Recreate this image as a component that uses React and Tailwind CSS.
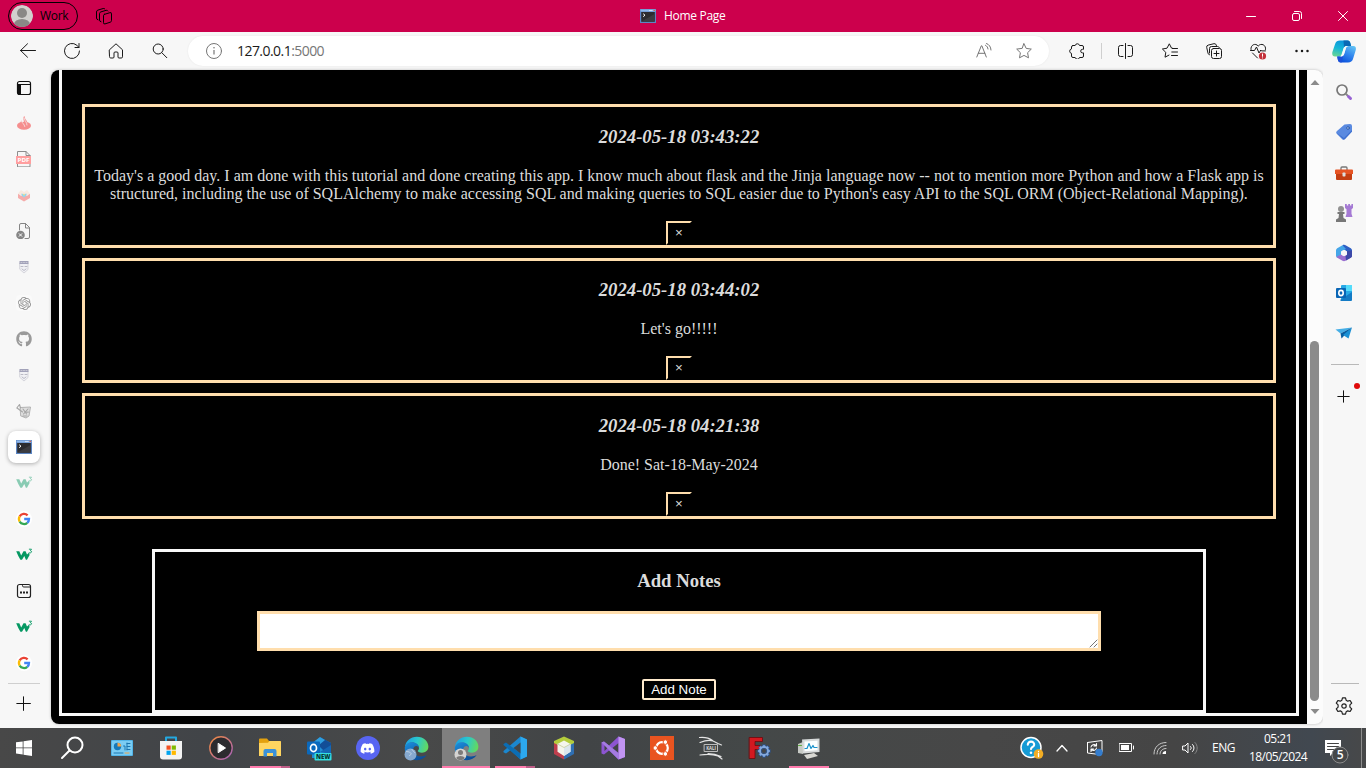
import React from "react";
import { FaGithub, FaDiscord } from "react-icons/fa";
import { SiOpenai } from "react-icons/si";

const UI = "font-['Open_Sans','Noto_Sans',sans-serif]";

function Icon({ s = 16, w, h, vb, children, className = "", ...rest }) {
  return (
    <svg
      width={w || s}
      height={h || s}
      viewBox={vb || `0 0 ${w || s} ${h || s}`}
      fill="none"
      stroke="currentColor"
      strokeWidth="1"
      strokeLinecap="round"
      strokeLinejoin="round"
      className={"block shrink-0 " + className}
      {...rest}
    >
      {children}
    </svg>
  );
}

function Terminal() {
  return (
    <Icon w={16} h={14} stroke="none">
      <rect width="16" height="14" fill="#5c86c4" />
      <rect x="0.5" y="0.5" width="15" height="2" fill="#8fb8ea" />
      <rect x="13.5" y="0.8" width="1.5" height="1.2" fill="#d8604c" />
      <rect x="9" y="1" width="3.5" height="0.8" fill="#dbe9fb" />
      <rect x="1.200" y="3" width="13.600" height="9.8" fill="#2c2c30" />
      <path d="M1.500 12.600L14.500 5V12.600Z" fill="#3c3c41" />
      <path d="M3.500 5l1.500 1.200-1.500 1.200" stroke="#fff" strokeWidth="1" />
    </Icon>
  );
}

/* ---------- title bar ---------- */
function TitleBar() {
  return (
    <header className="flex h-8 shrink-0 items-center bg-[#cc004c]">
      <div className="flex w-[600px] items-center">
        <div className="ml-2 flex h-7 w-[70px] items-center rounded-full border border-black pl-[2px]">
          <Icon s={22} stroke="none">
            <clipPath id="avatar"><circle cx="11" cy="11" r="11" /></clipPath>
            <g clipPath="url(#avatar)">
              <circle cx="11" cy="11" r="11" fill="#d2d0ce" />
              <circle cx="11" cy="8" r="5" fill="#8a8886" />
              <ellipse cx="11" cy="19.500" rx="8" ry="5.500" fill="#8a8886" />
            </g>
          </Icon>
          <span className={UI + " ml-[7px] text-[12px] leading-none tracking-[-0.3px] text-black"}>Work</span>
        </div>
        <Icon s={18} className="ml-[17px] text-black">
          <path d="M9.300 7.400l5.600-1.700a1.200 1.200 0 0 1 1.600 1.200v6.600a1.800 1.800 0 0 1-1.200 1.700l-5.300 1.700a1.200 1.200 0 0 1-1.500-1.200V8.800a1.500 1.500 0 0 1 .8-1.400Z" />
          <path d="M6 14.800a1.800 1.800 0 0 1-1.500-1.800V6.800a2 2 0 0 1 1.400-1.900l5.300-1.600a1.500 1.500 0 0 1 1.700.7" />
          <path d="M3 12.900A2 2 0 0 1 1.500 11V5a2 2 0 0 1 1.400-1.900L8.200 1.500a1.500 1.500 0 0 1 1.600.4" />
        </Icon>
      </div>
      <div className="flex flex-1 items-center pl-10">
        <Terminal />
        <span className={UI + " ml-2 text-[12px] leading-4 tracking-[-0.3px] text-white"}>Home Page</span>
      </div>
      <div className="flex w-[138px] text-white">
        <Icon w={46} h={12}><path d="M18.500 6.500h9" /></Icon>
        <Icon w={46} h={12}>
          <rect x="18.500" y="3.500" width="7" height="7" rx="1.500" />
          <path d="M20.500 1.500h5a2 2 0 0 1 2 2v5" />
        </Icon>
        <Icon w={46} h={12}><path d="M18.500 1.500l9 9M27.500 1.500l-9 9" /></Icon>
      </div>
    </header>
  );
}

/* ---------- toolbar ---------- */
const Slot = ({ children }) => <div className="flex w-11 shrink-0 items-center justify-center">{children}</div>;

function Copilot() {
  return (
    <Icon w={24} h={23} stroke="none">
      <defs>
        <linearGradient id="cpA" x1="0.5" y1="0" x2="0.2" y2="1"><stop stopColor="#0a94dc" /><stop offset="0.5" stopColor="#16b6d6" /><stop offset="1" stopColor="#6ad693" /></linearGradient>
        <linearGradient id="cpB" x1="0.9" y1="0" x2="0.3" y2="1"><stop stopColor="#64c5f4" /><stop offset="0.5" stopColor="#3287ee" /><stop offset="1" stopColor="#0a50dc" /></linearGradient>
      </defs>
      <path d="M8 0.500h7.500c2 0 2.600 1.500 3.100 3.500l.5 2H15c-2 0-3 .8-3.600 2.800L9.700 14c-.5 1.800-1.500 2.500-3.500 2.500H3C.6 16.500-.2 14.500.4 12L3.200 3.800C4 1.600 5.500.5 8 .5Z" fill="url(#cpA)" />
      <path d="M11.500.5h4c2 0 2.600 1.500 3.100 3.500l.5 2H15c-1.300 0-2.300.4-3 1.300Z" fill="#0968b4" />
      <path d="M16 22.500H9c-2 0-2.800-1.200-3.200-3l-.6-3H8c2.500 0 3.500-.8 4.100-2.800l1.500-5C14.200 6.800 15 6 17 6h4.500c2.200 0 2.800 2 2.200 4.200L21 19c-.7 2.300-2.300 3.500-5 3.500Z" fill="url(#cpB)" />
      <path d="M5.200 16.500H8c1.600 0 2.600-.3 3.300-1.100L9.600 22.500H9c-2 0-2.800-1.200-3.200-3Z" fill="#1b50d8" />
      <path d="M11.700 8.400c.7-1.800 1.700-2.400 3.300-2.400h1.200c-1.300.2-1.900.9-2.400 2.700l-1.500 5c-.6 1.900-1.500 2.800-3.600 2.800H8c1-.2 1.700-.9 2.100-2.500Z" fill="#f4fafb" />
    </Icon>
  );
}

function Toolbar() {
  return (
    <div className="flex h-[38px] shrink-0 items-center bg-[#f7f7f7] pl-[6px] text-[#1a1a1a]">
      <Slot><Icon><path d="M.5 7.500h15M7.500.8L.6 7.500l6.900 6.700" /></Icon></Slot>
      <Slot><Icon><path d="M15.500 8A7.500 7.500 0 1 1 12.800 2.200L15 4.500M15 .5v4h-4" /></Icon></Slot>
      <Slot><Icon><path d="M1.500 6.800L8 .8l6.500 6v7a1.200 1.200 0 0 1-1.200 1.200H11a1 1 0 0 1-1-1v-4a1 1 0 0 0-1-1H7a1 1 0 0 0-1 1v4a1 1 0 0 1-1 1H2.700a1.200 1.200 0 0 1-1.200-1.200Z" /></Icon></Slot>
      <Slot><Icon><circle cx="6.200" cy="6" r="5" /><path d="M9.800 9.700l5 5" /></Icon></Slot>
      <div className="ml-[6px] flex h-[30px] w-[861px] items-center rounded-full bg-white pl-[18px] shadow-[0_0_2px_rgba(0,0,0,0.08)]">
        <Icon className="text-[#767676]"><circle cx="8" cy="8" r="7.500" /><path d="M8 7v4.500" strokeWidth="1.200" strokeLinecap="butt" /><circle cx="8" cy="4.700" r=".8" fill="currentColor" stroke="none" /></Icon>
        <span className={UI + " ml-[15px] w-[192px] text-[14px] leading-5 tracking-[-0.55px] text-[#1b1b1b]"}>127.0.0.1<span className="text-[#767676]">:5000</span></span>
        <Icon className="ml-[547px] text-[#767676]"><path d="M.8 14L5.300 2.800h.6L10.300 14M2.300 10.300h6.600M9.500 2.300c1.500.8 2.300 2 2.500 3.700M10.500.5c2.700 1 4.300 3.300 4.500 6.500" /></Icon>
        <Icon className="ml-6 text-[#767676]"><path d="M8 .8l2.200 4.600 5.100.7-3.700 3.600.9 5.100L8 12.400l-4.500 2.400.9-5.100L.7 6.100l5.100-.7Z" /></Icon>
      </div>
      <div className="ml-[6px] flex items-center">
        <Slot><Icon><path d="M4 2.500H6.200a2.200 2.200 0 0 1 4.300 0H13a1.500 1.500 0 0 1 1.500 1.500v2.300h-1a1.800 1.800 0 0 0 0 3.600h1V13a1.500 1.500 0 0 1-1.500 1.500h-2.500a2.200 2.200 0 0 1-4.300 0H4A1.500 1.500 0 0 1 2.500 13v-2.600a2.300 2.300 0 0 1 0-4.500V4A1.500 1.500 0 0 1 4 2.500Z" /></Icon></Slot>
        <div className="mx-[2px] h-4 w-px bg-[#cfcfcf]" />
        <Slot><Icon><path d="M5 2.500H2.500a2 2 0 0 0-2 2v7a2 2 0 0 0 2 2H5M10 2.500h2.500a2 2 0 0 1 2 2v7a2 2 0 0 1-2 2H10M7.500.5v15" /></Icon></Slot>
        <Slot><Icon><path d="M11 5.400L9.500 5.100 7.300.8 5 5.200l-4.600.8 3.400 3.400-.8 4.800 4-2.100M10.500 5.500h5M9.800 9h5.700M9.500 12.500h6" /></Icon></Slot>
        <Slot><Icon><rect x="5.500" y="5.500" width="10" height="10" rx="2" /><path d="M10.500 8v5M8 10.500h5M3.500 11.800A2 2 0 0 1 2 10.200L.7 4.400a2 2 0 0 1 1.500-2.300L8 .7a2 2 0 0 1 2.300 1.400l.2.900M3.500 10V5.500a2 2 0 0 1 2-2h6a2 2 0 0 1 1.800 1" /></Icon></Slot>
        <Slot>
          <Icon w={17} h={17}>
            <path d="M1 6.500C.2 2 5.500-.5 8.200 3.100 11-.5 16.500 2 15.500 6.500M.5 7.500h4l2-3.500 2.500 6 1.800-3 .7.900h4M2.500 10l5 5" />
            <circle cx="12.500" cy="13" r="3.600" fill="#c4313a" stroke="none" /><path d="M12.500 11v2.300M12.500 14.900v.1" stroke="#fff" />
          </Icon>
        </Slot>
        <Slot><Icon stroke="none" fill="currentColor"><circle cx="2.500" cy="8" r="1.250" /><circle cx="8" cy="8" r="1.250" /><circle cx="13.500" cy="8" r="1.250" /></Icon></Slot>
        <div className="ml-[8px]"><Copilot /></div>
      </div>
    </div>
  );
}

/* ---------- left rail ---------- */
const Shield = () => (
  <Icon className="opacity-60" stroke="none">
    <path d="M4 4h8v6.500L8 14 4 10.500Z" fill="#ededf3" stroke="#a9a9b8" strokeWidth=".7" />
    <rect x="3.500" y="2" width="9" height="3" fill="#6b6b90" />
    <path d="M5 3.500h1M7.500 3.500h1M10 3.500h1" stroke="#b9b9cb" strokeWidth=".8" />
    <path d="M5 7.500h2M9 7.500h2M6 10l2 1.500 2-1.500" stroke="#88889c" strokeWidth=".9" />
  </Icon>
);
const W3 = ({ faded }) => (
  <Icon w={18} h={14} stroke="none" className={faded ? "opacity-45" : ""}>
    <path d="M1.200 3.200H4.300L6.200 7.400 8.500 3.200H10.600L12 6.600 14 4.800 14.600 7 12 11.700H10.900L9.300 8 7 11.700H5.400L3.300 8Z" fill="#059862" />
    <path d="M14.300 1.200h2.200l-1.200 1.500c2.100.1 1.600 2.900-1.100 2.200" stroke="#059862" strokeWidth=".9" />
  </Icon>
);
const Google = () => (
  <Icon s={16} stroke="none">
    <circle cx="8" cy="8" r="8" fill="#fff" />
    <g strokeWidth="2.300" strokeLinecap="butt">
      <path d="M11.600 4.400A5 5 0 0 0 3.700 5.400" stroke="#ea4335" />
      <path d="M3.700 5.400a5 5 0 0 0 0 5.200" stroke="#fbbc05" />
      <path d="M3.700 10.600a5 5 0 0 0 7.600 1.200" stroke="#34a853" />
      <path d="M11.300 11.800A5 5 0 0 0 13 8H8.200" stroke="#4285f4" strokeLinejoin="miter" />
    </g>
  </Icon>
);

function LeftRail() {
  const items = [
    <Icon className="text-[#111]"><rect x="1.500" y="1.500" width="13" height="13" rx="2" strokeWidth="1.200" /><path d="M2 4.500h12.500" /><path d="M1.500 4.500H5V15H3a1.500 1.500 0 0 1-1.500-1.500Z" fill="#111" stroke="none" /></Icon>,
    <Icon stroke="none"><ellipse cx="8" cy="10.700" rx="7" ry="4" fill="#f58e8e" /><path d="M5.500 4.500C4.500 7 8.500 8 8.700 11.500c2-2.500-1.700-4.500-1.200-8.500C7.300 1.500 8.500 1 8.500 1c0 3.500 3.500 4.500 3 8.500L10 13H5.500L4 9Z" fill="#f58e8e" /><path d="M5.500 6c.2 2 3 3 3.300 5.500M8.300 3.500c.2 2.700 2.700 3.500 2.700 6.500" stroke="#f7f7f7" strokeWidth=".7" /></Icon>,
    <Icon className="text-[#8d8d8d]"><path d="M1.500 15.500v-15H10L14 4.500v11ZM10 .5v4h4" /><rect x="0" y="5" width="15" height="8" fill="#ff9f9f" stroke="none" /><text x="1.500" y="11.200" fontSize="5.800" fontWeight="bold" fontFamily="Open Sans" fill="#fff" stroke="none" textLength="12" lengthAdjust="spacingAndGlyphs">PDF</text></Icon>,
    <Icon stroke="none" className="opacity-60"><path d="M2 7l6 1 6-1v4l-6 3.500-6-3.500Z" fill="#f47b79" /><path d="M2 6.500L5 3l3 2 3-2 3 3.500-3 2.500H5Z" fill="#fbe0d2" /><path d="M5.500 6.500l2.500.8 2.500-.8v2L8 10.500l-2.500-2Z" fill="#58bee8" /><path d="M7 7.500L8 6.500l1 1-1 1.300Z" fill="#ecd640" /></Icon>,
    <Icon className="text-[#858585]"><path d="M3.500 7V2A1.500 1.500 0 0 1 5 .5h4.500l4 4V14a1.500 1.500 0 0 1-1.500 1.500H9M9.500.5V5h4" /><circle cx="4.500" cy="12" r="4.300" fill="#858585" stroke="none" /><path d="M3.200 10.700l2.600 2.600M5.800 10.700l-2.600 2.600" stroke="#fff" /></Icon>,
    <Shield />,
    <div className="flex h-4 w-4 items-center justify-center rounded bg-[#fafafa]"><SiOpenai size={13} className="text-[#909090]" /></div>,
    <FaGithub size={16} className="text-[#9a9a9a]" />,
    <Shield />,
    <Icon className="text-[#a5a5a5]"><path d="M4.500 4.500L14.500 4l-1.500 9-3 2-5-2Z" fill="#dedede" strokeWidth=".8" /><path d="M.8 5L3.500 1.500 4.500 5M1 5l5.500 4M7 6l3.500 5M12 6l-4.500 5M9 9.500L12.500 9M7 13h4" strokeWidth="1.100" /></Icon>,
    <div className="flex h-8 w-8 items-center justify-center rounded-lg bg-white shadow-[0_1px_4px_rgba(0,0,0,0.3)]"><Terminal /></div>,
    <W3 faded />, <Google />, <W3 />,
    <Icon className="text-[#222]"><rect x="1.500" y="1.500" width="13" height="13" rx="2" strokeWidth="1.200" /><path d="M6.500 1.500v1.200a1.300 1.300 0 0 0 1.300 1.300h6.700" /><path d="M4 9.500h2M7 9.500h2M10 9.500h2" strokeWidth="2" strokeLinecap="butt" /></Icon>,
    <W3 />, <Google />,
  ];
  return (
    <aside className="flex w-[51px] shrink-0 flex-col bg-[#f7f7f7] pr-[3px]">
      {items.map((item, i) => <div key={i} className="flex h-9 shrink-0 items-center justify-center first:h-[35px] first:pt-px">{item}</div>)}
      <div className="mx-2 mt-[2px] h-px bg-[#cfcfcf]" />
      <div className="mt-3 flex justify-center"><Icon className="text-[#111]"><path d="M7.500.8v13.600M.8 7.500h13.600" /></Icon></div>
    </aside>
  );
}

/* ---------- page ---------- */
function Note({ date, children, size }) {
  return (
    <article className={"flex flex-col items-center border-[3px] border-[#ffdead] text-center text-[#dcdcdc] " + size}>
      <h3 className="text-[18.72px] font-bold italic leading-[22px]">{date}</h3>
      <p className="mt-[19px] text-[16px] leading-[18px]">{children}</p>
      <button className="mt-auto h-6 w-[26px] shrink-0 border-2 border-b-black border-l-[#ffdead] border-r-black border-t-[#ffdead] bg-black pb-[1px] font-['Liberation_Sans',Arial,sans-serif] text-[13.333px] leading-none">×</button>
    </article>
  );
}

function Page() {
  return (
    <main className="flex h-[654px] w-[1272px] shrink-0 overflow-hidden rounded-[8px] bg-[#fcfcfc] shadow-[0_0_3px_rgba(0,0,0,0.25)]">
      <div className="w-[1256px] shrink-0 bg-black px-2 font-['Liberation_Serif','Times_New_Roman',serif]">
        <div className="flex h-[646px] flex-col border-x-[3px] border-b-[3px] border-[#f8f8f8] px-5 pt-[34px]">
          <div className="flex flex-col gap-[10px]">
            <Note date="2024-05-18 03:43:22" size="h-[144px] pt-[19px]">
              Today's a good day. I am done with this tutorial and done creating this app. I know much about flask and the Jinja language now -- not to mention more Python and how a Flask app is<br />
              structured, including the use of SQLAlchemy to make accessing SQL and making queries to SQL easier due to Python's easy API to the SQL ORM (Object-Relational Mapping).
            </Note>
            <Note date="2024-05-18 03:44:02" size="h-[125px] pt-[18px]">Let's go!!!!!</Note>
            <Note date="2024-05-18 04:21:38" size="h-[126px] pt-[19px]">Done! Sat-18-May-2024</Note>
          </div>
          <section className="mx-[70px] mt-[30px] flex h-[164px] shrink-0 flex-col items-center border-[3px] border-[#f8f8f8]">
            <h3 className="mt-[18px] text-[18.72px] font-bold leading-[22px] text-[#dcdcdc]">Add Notes</h3>
            <div className="mt-[19px] flex h-10 w-[844px] items-end justify-end border-[3px] border-[#ffdead] bg-white">
              <Icon s={9} className="text-[#666]"><path d="M1 8L8 1M5 8l3-3" strokeWidth=".9" /></Icon>
            </div>
            <button className="mt-7 h-[21px] w-[74px] rounded-[2px] border-2 border-[#ffebcd] bg-black font-['Liberation_Sans',Arial,sans-serif] text-[13.333px] leading-none text-white">Add Note</button>
          </section>
        </div>
      </div>
      <div className="flex w-[15px] flex-col items-center pt-[9px]">
        <Icon w={10} h={7} stroke="none" fill="#8b8b8b"><path d="M.5 6L5 1l4.500 5Z" /></Icon>
        <div className="mt-[255px] h-[360px] w-[9px] shrink-0 rounded-full bg-[#8b8b8b]" />
        <Icon w={10} h={7} stroke="none" fill="#8b8b8b" className="mt-[7px]"><path d="M.5 1h9L5 6Z" /></Icon>
      </div>
    </main>
  );
}

/* ---------- right rail ---------- */
function RightRail() {
  const items = [
    <Icon s={18}><circle cx="7" cy="7" r="5" stroke="#777" strokeWidth="1.700" /><path d="M11 11l1.500 1.500" stroke="#888" strokeWidth="2" /><path d="M13.500 13.500l2 2" stroke="#9863d3" strokeWidth="3" /></Icon>,
    <Icon s={18} stroke="none"><path d="M9.500 1.500l5.500-.4a2 2 0 0 1 2 2V8.500L10 16a2 2 0 0 1-3 0L1.700 10.800a2 2 0 0 1 0-2.600Z" fill="#5a8ae0" /><path d="M1.200 9.500L7 15l1.500 1.500L10 16l7-7.500V7l-8 8Z" fill="#3f70cf" /><circle cx="13" cy="5" r="1.300" fill="#dbe7fc" stroke="#2858aa" /></Icon>,
    <Icon s={18} stroke="none"><path d="M6 6V4a1 1 0 0 1 1-1h4a1 1 0 0 1 1 1v2" stroke="#777" strokeWidth="1.300" /><path d="M1 5.500h16a1 1 0 0 1 1 1V10H0V6.500a1 1 0 0 1 1-1Z" fill="#e65424" /><path d="M1 10h16v5a1 1 0 0 1-1 1H2a1 1 0 0 1-1-1Z" fill="#c43e12" /><rect x="7.500" y="8.500" width="3" height="4" rx=".8" fill="#ddd" /></Icon>,
    <Icon s={20} stroke="none"><path d="M11 1h1.800v1.500h1.400V1h1.800v1.500h1.400V1H19v4l-1.500 1.200v4.500l1 3.300h-7l1-3.300V6.200L11 5Z" fill="#a57ad4" /><circle cx="7" cy="6" r="3" fill="#919191" /><path d="M3.500 9h7v2H9l.5 4 2.500 1.500V19H2v-2.500L4.500 15 5 11H3.500Z" fill="#777" /></Icon>,
    <Icon s={18} stroke="none">
      <path d="M7.500 1.200C8.500.6 10 .8 11 1.400L15.800 4.200c.7.500 1.200 1.300 1.200 2.200V12L12 9.500V7.500L8 5Z" fill="#2e5fc4" />
      <path d="M7.500 1.200L2.200 4.300A2.500 2.500 0 0 0 1 6.500v5c0 1 .5 1.900 1.300 2.300L6 11V7.500L11 5Z" fill="#45a6e8" />
      <path d="M1.500 12.700L6 10.500l3 1.700 4.500-2.400L17 11.500c0 1-.5 1.800-1.200 2.200L10.500 16.800a3 3 0 0 1-3 0L2.300 13.800Z" fill="#9a6fd0" />
      <path d="M17 6.500v5.700c-.3 1-.7 1.300-1.200 1.500L11 16.500l-.5-4.500L12 11V7Z" fill="#3b48a8" />
      <circle cx="9" cy="9" r="2.800" fill="#f7f7f7" />
    </Icon>,
    <Icon s={18} stroke="none"><rect x="6" y="1" width="11" height="15" rx="1" fill="#27a9e6" /><path d="M11 1h6v6h-6Z" fill="#54dcfb" /><path d="M5 16l12-8v8a1 1 0 0 1-1 1H6Z" fill="#137bc5" /><rect x="1" y="4" width="10" height="10" rx="1" fill="#0865b5" /><ellipse cx="6" cy="9" rx="2.200" ry="2.600" stroke="#fff" strokeWidth="1.600" /></Icon>,
    <Icon s={18} stroke="none"><path d="M.5 5.500L17 3.500 5.500 9.500Z" fill="#45aee6" /><path d="M5.500 9.500L17 3.500 6.500 14.500Z" fill="#0a5d9e" /><path d="M8 11L17 3.500 13.500 14.500Z" fill="#1b90d4" /></Icon>,
  ];
  return (
    <aside className="flex w-[43px] shrink-0 flex-col items-center bg-[#f7f7f7] pr-[1px] pt-[2px]">
      {items.map((item, i) => <div key={i} className={"flex shrink-0 items-center justify-center " + (i === 2 ? "h-[41px] pt-px" : "h-10")}>{item}</div>)}
      <div className="ml-px mt-[11px] h-px w-7 shrink-0 bg-[#b9b9b9]" />
      <div className="relative mt-6 shrink-0">
        <Icon className="text-[#111]"><path d="M7.500 1.800v11.400M1.800 7.500h11.400" /></Icon>
        <span className="absolute -top-[6px] left-[18px] h-[6px] w-[6px] rounded-full bg-[#e00b0b]" />
      </div>
      <div className="ml-px mt-[278px] h-px w-7 shrink-0 bg-[#b9b9b9]" />
      <Icon s={18} className="mt-[13px] text-[#222]" strokeWidth="1.200">
        <circle cx="9" cy="9" r="2.200" />
        <path d="M7.500.9h3l.7 2.400 1.500.9 2.400-.7 1.600 2.600-1.800 1.800v2.200l1.800 1.800-1.600 2.600-2.400-.7-1.500.9-.7 2.400h-3l-.7-2.400-1.500-.9-2.400.7-1.600-2.600 1.800-1.800V7.900L1.300 6.100l1.600-2.600 2.400.7 1.500-.9Z" />
      </Icon>
    </aside>
  );
}

/* ---------- taskbar ---------- */
function Edge({ id, badge }) {
  return (
    <Icon s={25} stroke="none" fill="none">
      <defs>
        <linearGradient id={id + "t"} x1="0" y1="0.3" x2="1" y2="0.5"><stop stopColor="#1d9de2" /><stop offset=".5" stopColor="#2ac9cc" /><stop offset="1" stopColor="#65d95c" /></linearGradient>
        <linearGradient id={id + "b"} x1="0" y1="0" x2=".6" y2="1"><stop stopColor="#1b91df" /><stop offset="1" stopColor="#0c4d98" /></linearGradient>
      </defs>
      <path d="M.8 11.500C1.500 5 6.500.8 12.800.8c7 0 11.600 4.800 11.600 9.800 0 4-3 6.200-6.400 6.200-3 0-4.200-1-4.200-1.700 0-.5 1.200-1 1.200-3 0-3-3-5.500-7-5.500-3 0-5.600 1.600-7.200 4.900Z" fill={`url(#${id}t)`} />
      <path d="M.8 11.500C2.400 7.500 5 6.300 8 6.300c4 0 7 2.600 7 5.600-.9-2-3-2.600-4.400-1.300-3.800 3.700 0 9.900 6.400 9.900 2.500 0 4.500-.7 5.700-1.400-2.200 3.500-5.800 5.100-9.700 5.100C5.500 24.200.2 18 .8 11.500Z" fill={`url(#${id}b)`} />
      {badge === "user" ? (
        <g><circle cx="6.500" cy="18.500" r="6" fill="#d6d4d2" /><circle cx="6.500" cy="16.500" r="2.500" fill="#7d7b7a" /><path d="M2.200 22c1-2.800 7.600-2.800 8.600 0-2.300 3-6.300 3-8.600 0Z" fill="#7d7b7a" /></g>
      ) : (
        <g><circle cx="6.500" cy="18.500" r="6" fill="#86a9cf" /><path d="M2.500 15.500l3 .5 2 2-2 1.500M8 13.500l2.500 3" stroke="#b9cfe5" strokeWidth="1" /></g>
      )}
    </Icon>
  );
}

function Taskbar() {
  const apps = [
    { icon: <Icon s={16} stroke="none" fill="#fff"><path d="M0 2.300l6.700-.9v6.100H0ZM7.500 1.300L16 0v7.500H7.500ZM0 8.300h6.700v6.200L0 13.600ZM7.500 8.300H16V16l-8.500-1.200Z" /></Icon>, shift: "pr-[2px]" },
    { icon: <Icon s={24} stroke="#fff" strokeWidth="2"><circle cx="15" cy="9" r="7.500" /><path d="M9.500 14.500l-7.500 7.500" /></Icon>, shift: "pr-[5px]" },
    { icon: <Icon w={22} h={16} stroke="none"><rect width="22" height="16" rx="1" fill="#52b5e9" /><rect x="1" y="1" width="20" height="14" fill="#7accf3" /><circle cx="6.500" cy="6.500" r="3.700" fill="#1678b8" /><path d="M6.500 2.800a3.700 3.700 0 0 1 3.700 3.700H6.500Z" fill="#f1a44a" /><path d="M12.500 6h1.500v4M16 3v7M16 3.500h3M16 6.500h3M16 9.500h3M3 13h9" stroke="#1c76af" strokeWidth="1" /><path d="M14 13h4" stroke="#f1a44a" /></Icon>, shift: "pr-[2px]" },
    { icon: <Icon s={24} stroke="none"><path d="M7 6V1.500h10V6" stroke="#24a8df" strokeWidth="2" /><path d="M1 5h22v15.500a3 3 0 0 1-3 3H4a3 3 0 0 1-3-3Z" fill="#f3f3f3" /><path d="M7.500 9.500h4.200v4.200H7.500Z" fill="#f25022" /><path d="M12.700 9.500h4.200v4.200h-4.200Z" fill="#7fba00" /><path d="M7.500 14.700h4.200v4.200H7.500Z" fill="#00a4ef" /><path d="M12.700 14.700h4.200v4.200h-4.200Z" fill="#ffb900" /></Icon>, shift: "pr-[2px]" },
    { icon: <Icon s={24} stroke="none"><defs><linearGradient id="mp" x1="0" y1="0" x2="1" y2="1"><stop stopColor="#f18b3d" /><stop offset="1" stopColor="#a360ba" /></linearGradient></defs><circle cx="12" cy="12" r="11.200" fill="#2c2b2f" stroke="url(#mp)" strokeWidth="1.400" /><path d="M9.500 7.500l7 4.500-7 4.500Z" fill="#fff" stroke="#fff" /></Icon> },
    { icon: <Icon w={22} h={20} stroke="none"><path d="M0 1.500A1 1 0 0 1 1 .5h7L10 3h11a1 1 0 0 1 1 1v14H0Z" fill="#e3a10f" /><path d="M0 5l9-.2 1.500-1.800H21a1 1 0 0 1 1 1v14H0Z" fill="#ffd560" /><path d="M4.500 18.500v-5.500a2 2 0 0 1 2-2h9a2 2 0 0 1 2 2v5.500H14V15H8v3.500Z" fill="#3b91d8" /></Icon>, bar: "split" },
    { icon: <Icon s={25} stroke="none"><path d="M5 7l8-5.500L24 7v15H5Z" fill="#218dd4" /><path d="M13 1L24 7v3l-7 5-8-8Z" fill="#124e97" /><path d="M8 5l5-4 5 3-6 5Z" fill="#2f9fe0" /><path d="M13 16l11-7v9Z" fill="#1567b5" /><rect x="0" y="5.500" width="13" height="13" rx="1" fill="#0a69bd" /><ellipse cx="6.500" cy="12" rx="3" ry="3.600" stroke="#fff" strokeWidth="1.700" /><rect x="7.500" y="17" width="17" height="7.500" rx="1" fill="#35dfe2" /><text x="9" y="23.200" fontSize="6.800" fontWeight="800" fontFamily="Open Sans" fill="#073838" textLength="14.500" lengthAdjust="spacingAndGlyphs">NEW</text></Icon> },
    { icon: <div className="flex h-6 w-6 items-center justify-center rounded-full bg-[#5865f2]"><FaDiscord size={15} className="text-white" /></div>, shift: "pr-px" },
    { icon: <Edge id="e1" />, shift: "pr-px" },
    { icon: <Edge id="e2" badge="user" />, active: true, bar: "full" },
    { icon: <Icon s={24} stroke="none"><path d="M17.500.5L24 3.500v17l-6.500 3L7.500 14 3 17.600.5 16.300v-1.200L17.500.5Z" fill="#1b87cf" /><path d="M.5 8L3 6.400l14.500 11.100v6L.5 9Z" fill="#0b6db4" /><path d="M17.500.5L24 3.500v17l-6.500 3Z" fill="#2ca8ee" /><path d="M17.500 6.500v11L10.500 12Z" fill="#444648" /></Icon>, bar: "split" },
    { icon: <Icon s={24} stroke="none"><path d="M2 5L12 .5 22 5v3L12 12 2 8Z" fill="#b4cd3c" /><path d="M2 7l10 5v11.500L2 18Z" fill="#be3e4d" /><path d="M22 7l-10 5v11.500L22 18Z" fill="#2f6fb2" /><path d="M12 4.500L18.500 8v7.800L12 20l-6.500-4.200V8Z" fill="#f4f5ec" /><path d="M12 11.500V20l6.500-4.200V8Z" fill="#dbe6ed" /><path d="M5.500 8l6.500 3.500L18.500 8" stroke="#c6ce9a" strokeWidth=".8" /></Icon> },
    { icon: <Icon s={24} stroke="none"><path d="M17.500.5L24 3v18l-6.500 2.500L8 14.500 3 18.600.5 17.500v-11L3 5.400l5 4.100ZM3.500 9v6l3-3ZM17.500 7L11.500 12l6 5Z" fill="#8d55d2" fillRule="evenodd" /><path d="M17.500.5L24 3v18l-6.500 2.500Z" fill="#c194f2" /><path d="M.5 6.500L3 5.400l14.500 11.800v6.300Z" fill="#a47be0" /></Icon> },
    { icon: <Icon s={24} stroke="none"><rect width="24" height="24" fill="#e95420" /><circle cx="12" cy="12" r="5.800" stroke="#fff" strokeWidth="2.200" /><g fill="#fff" stroke="#e95420" strokeWidth="1"><circle cx="5.300" cy="12" r="2.300" /><circle cx="15.400" cy="6.100" r="2.300" /><circle cx="15.400" cy="17.900" r="2.300" /></g></Icon> },
    { icon: <Icon s={24} stroke="#e4e4e4"><path d="M.5 1.500c5-.5 9 0 13 3M1 6.500c5-2 10-2.500 13-1.500l5 2.500 3.500 1.500M1 19c6-1 13-1 18 1l4 3M9 17.500c5 0 9 1 13 3" strokeWidth="1.200" /><rect x="5.500" y="8.500" width="13" height="7" stroke="#bdbdbd" /><text x="7.200" y="14" fontSize="5.500" fontWeight="bold" fontFamily="Open Sans" fill="#ddd" stroke="none" textLength="9.600" lengthAdjust="spacingAndGlyphs">KALI</text></Icon> },
    { icon: <Icon s={24} stroke="none"><path d="M1.500 1.500h13v4H7v4h5.500v4H7v9H1.500Z" fill="#d21920" stroke="#6e090d" strokeWidth=".8" /><path d="M16 8.500v13M9.500 15h13M11.400 10.400l9.200 9.200M20.600 10.400l-9.200 9.200" stroke="#28579c" strokeWidth="3.400" strokeLinecap="butt" /><path d="M16 9.200v11.600M10.200 15h11.600M11.900 10.900l8.200 8.200M20.100 10.900l-8.200 8.200" stroke="#83a8dc" strokeWidth="2.200" strokeLinecap="butt" /><circle cx="16" cy="15" r="4" fill="#444648" stroke="#83a8dc" strokeWidth="2" /><circle cx="16" cy="15" r="2.600" stroke="#28579c" strokeWidth=".7" /></Icon> },
    { icon: <Icon s={24} stroke="none"><path d="M1 8l5-2v12l-5-1Z" fill="#c7cac5" /><path d="M1.500 9.500h3" stroke="#5cae3c" /><path d="M5 3.500l17.500-1V16L6 17.500Z" fill="#d7dada" /><path d="M7.500 5.500l13-.8v9.500l-13 1Z" fill="#fcffff" /><path d="M8 12.500h2l2-5 2 5 2-3 1 2h3" stroke="#1a91ca" strokeWidth="1.200" /><path d="M7 19l10-2 4 3-11 3Z" fill="#d8d8d3" /></Icon>, bar: "wide" },
  ];
  return (
    <footer className="flex h-10 shrink-0 bg-[#444648] bg-[linear-gradient(90deg,#484848_0%,#414448_15%,#484949_31%,#414446_43%,#444848_55%,#474747_72%,#454545_86%,#414850_96%,#474849_100%)] text-white">
      <div className="flex gap-px pl-px">
        {apps.map((a, i) => (
          <div key={i} className={"flex h-10 w-12 flex-col items-center " + (a.active ? "bg-[#7f7f7f]" : "")}>
            <div className={"flex h-[38px] items-center pt-[2px] " + (a.shift || "")}>{a.icon}</div>
            {a.bar === "full" && <div className="h-[2px] w-full bg-[#ff7bad]" />}
            {a.bar === "wide" && <div className="h-[2px] w-10 bg-[#ff7bad]" />}
            {a.bar === "split" && <div className="flex h-[2px] w-10"><div className="w-[31px] bg-[#ff7bad]" /><div className="w-[9px] bg-[#bd5d87]" /></div>}
          </div>
        ))}
      </div>
      <div className="ml-auto flex items-center">
        <Icon s={24} stroke="none" className="mr-[12px]"><circle cx="11" cy="11.500" r="10" fill="#159bd5" stroke="#fff" strokeWidth="1.500" /><path d="M7.800 8.800c0-4.500 6.700-4 6.400 0-.3 2-3.200 2.300-3.200 4.300" stroke="#fff" strokeWidth="2.100" /><circle cx="11" cy="16.800" r="1.300" fill="#fff" /><circle cx="18.500" cy="18" r="4.800" fill="#f2ad23" /><path d="M18.500 17.500v3M18.500 15.400v.2" stroke="#fff" strokeWidth="1.300" /></Icon>
        <Icon w={12} h={8} className="mr-[18px]" strokeWidth="1.300"><path d="M1 7l5-5.500L11 7" /></Icon>
        <Icon s={18} className="mr-[15px]"><path d="M1.500 3.500l14.500-2v11M1.500 3.500V14l8 1" /><path d="M5 8a3 3 0 0 1 5-1.500M10.500 4.500v2.500H8M10.500 9a3 3 0 0 1-5 1.500M5 12.500V10h2.500" strokeWidth="1.100" /><circle cx="13" cy="13.500" r="3.700" fill="#347dce" stroke="none" /></Icon>
        <Icon w={15} h={10} className="mr-[19px]"><rect x=".5" y=".5" width="12" height="8" /><rect x="2" y="2" width="8" height="5" fill="#fff" stroke="none" /><path d="M14.500 3v3" /></Icon>
        <Icon s={14} className="mr-[15px]"><path d="M1 13C1 6 6 1.500 13 1.500M4 13c0-5 4-8.500 9-8.500M7 13c0-3.300 2.700-5.500 6-5.500" stroke="#cacaca" /><path d="M9.500 13c0-2 1.500-3 3.500-3v3Z" fill="#fff" stroke="none" /></Icon>
        <Icon w={17} h={14} className="mr-[13px]"><path d="M1 5h2l3-3v10L3 9H1Z" /><path d="M8.500 5.500c1 1 1 2 0 3M10.500 3.500c2 2 2 5 0 7" /><path d="M13 1.500c3 3 3 8 0 11" stroke="#888" /></Icon>
        <span className={UI + " w-[37px] text-[12px] leading-none tracking-[-0.5px]"}>ENG</span>
        <div className={UI + " flex w-[58px] flex-col items-center whitespace-nowrap text-[12px] leading-[18px] tracking-[-0.55px]"}><span>05:21</span><span>18/05/2024</span></div>
        <div className="ml-[17px] flex items-center pt-[7px]">
          <Icon w={26} h={26} stroke="none"><path d="M1 1h16v13H9l-3 3v-3H1Z" fill="#fff" /><path d="M3.500 4.500h11M3.500 7.500h11M3.500 10.500h7" stroke="#444" /><circle cx="16" cy="16" r="8" fill="#454749" stroke="#8b8b8b" /><text x="12.800" y="20.300" fontSize="12" fontFamily="Open Sans" fontWeight="600" fill="#fff">5</text></Icon>
        </div>
        <div className="ml-[11px] mr-1 h-10 w-px bg-[#8d8d8d]" />
      </div>
    </footer>
  );
}

export default function App() {
  return (
    <div className="flex h-[768px] w-[1366px] flex-col overflow-hidden bg-[#f7f7f7]">
      <TitleBar />
      <Toolbar />
      <div className="flex h-[658px] shrink-0">
        <LeftRail />
        <Page />
        <RightRail />
      </div>
      <Taskbar />
    </div>
  );
}
